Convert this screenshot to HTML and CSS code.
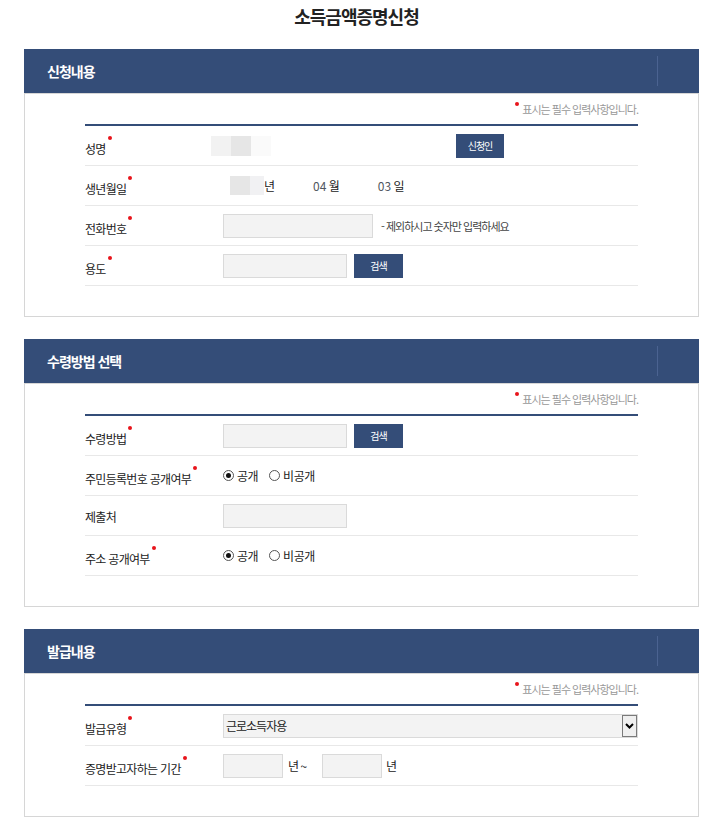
FILE: index.html
```html
<!DOCTYPE html>
<html lang="ko">
<head>
  <meta charset="UTF-8">
  <meta name="viewport" content="width=device-width, initial-scale=1.0">
  <title>소득금액증명신청</title>
  <link rel="stylesheet" href="styles.css">
</head>
<body>

  <h1 class="page-title">소득금액증명신청</h1>

  <!-- 신청내용 -->
  <div class="section">
    <div class="section-head"><h2>신청내용</h2><span class="head-side"></span></div>
    <div class="section-body">
      <p class="req-note"><span class="dot"></span>표시는 필수 입력사항입니다.</p>
      <div class="form-table">
        <div class="form-row">
          <div class="label">성명<span class="dot"></span></div>
          <div class="value">
            <span class="masked name-mask"><i class="m-a"></i><i class="m-b"></i><i class="m-c"></i></span>
            <button class="btn btn-small">신청인</button>
          </div>
        </div>
        <div class="form-row">
          <div class="label">생년월일<span class="dot"></span></div>
          <div class="value">
            <span class="masked birth-mask"><i class="m-b"></i><i class="m-d"></i></span>
            <span class="unit">년</span>
            <span class="date-part month"><b>04</b> 월</span>
            <span class="date-part day"><b>03</b> 일</span>
          </div>
        </div>
        <div class="form-row">
          <div class="label">전화번호<span class="dot"></span></div>
          <div class="value">
            <input class="field field-phone" type="text">
            <span class="hint">- 제외하시고 숫자만 입력하세요</span>
          </div>
        </div>
        <div class="form-row">
          <div class="label">용도<span class="dot"></span></div>
          <div class="value">
            <input class="field field-mid" type="text">
            <button class="btn btn-search">검색</button>
          </div>
        </div>
      </div>
    </div>
  </div>

  <!-- 수령방법 선택 -->
  <div class="section">
    <div class="section-head"><h2>수령방법 선택</h2><span class="head-side"></span></div>
    <div class="section-body">
      <p class="req-note"><span class="dot"></span>표시는 필수 입력사항입니다.</p>
      <div class="form-table">
        <div class="form-row">
          <div class="label">수령방법<span class="dot"></span></div>
          <div class="value">
            <input class="field field-mid" type="text">
            <button class="btn btn-search">검색</button>
          </div>
        </div>
        <div class="form-row">
          <div class="label">주민등록번호 공개여부<span class="dot"></span></div>
          <div class="value">
            <label class="radio"><span class="radio-mark checked"></span>공개</label>
            <label class="radio"><span class="radio-mark"></span>비공개</label>
          </div>
        </div>
        <div class="form-row">
          <div class="label">제출처</div>
          <div class="value">
            <input class="field field-mid" type="text">
          </div>
        </div>
        <div class="form-row">
          <div class="label">주소 공개여부<span class="dot"></span></div>
          <div class="value">
            <label class="radio"><span class="radio-mark checked"></span>공개</label>
            <label class="radio"><span class="radio-mark"></span>비공개</label>
          </div>
        </div>
      </div>
    </div>
  </div>

  <!-- 발급내용 -->
  <div class="section">
    <div class="section-head"><h2>발급내용</h2><span class="head-side"></span></div>
    <div class="section-body">
      <p class="req-note"><span class="dot"></span>표시는 필수 입력사항입니다.</p>
      <div class="form-table">
        <div class="form-row">
          <div class="label">발급유형<span class="dot"></span></div>
          <div class="value">
            <div class="select">
              <span class="select-text">근로소득자용</span>
              <span class="select-arrow">
                <svg width="9" height="6" viewBox="0 0 9 6"><polyline points="1,1 4.5,4.5 8,1" fill="none" stroke="#000" stroke-width="2"/></svg>
              </span>
            </div>
          </div>
        </div>
        <div class="form-row">
          <div class="label">증명받고자하는 기간<span class="dot"></span></div>
          <div class="value">
            <input class="field field-year" type="text">
            <span class="unit unit-range">년 ~</span>
            <input class="field field-year" type="text">
            <span class="unit unit-end">년</span>
          </div>
        </div>
      </div>
    </div>
  </div>

</body>
</html>
```

FILE: styles.css
```css
:root {
  --navy: #344d78;
  --navy-line: #4b6391;
  --text: #222;
  --row-line: #e8e8e8;
  --box-line: #d6d6d6;
  --field-bg: #f3f3f3;
  --field-line: #dadada;
  --req: #e8141b;
}

body {
  margin: 0;
  font-family: "Noto Sans CJK KR", "Noto Sans", sans-serif;
  color: var(--text);
  background: #fff;
}

.page-title {
  margin: 3px 0 20px;
  height: 26px;
  line-height: 26px;
  font-size: 18px;
  font-weight: bold;
  letter-spacing: -1px;
  text-align: center;
  color: #222;
}

.section {
  width: 675px;
  margin: 0 0 22px 24px;
}

.section + .section + .section {
  margin-top: 1px;
}

.section-head {
  display: flex;
  align-items: center;
  height: 44px;
  background: var(--navy);
}

.section-head h2 {
  flex: 1;
  margin: 0 0 0 23px;
  font-size: 14px;
  font-weight: bold;
  letter-spacing: -1px;
  color: #fff;
}

.head-side {
  width: 41px;
  height: 30px;
  border-left: 1px solid var(--navy-line);
}

.section-body {
  border: 1px solid var(--box-line);
  padding: 0 60px 30px;
}

.req-note {
  display: flex;
  justify-content: flex-end;
  align-items: center;
  height: 30px;
  margin: 0;
  font-size: 11px;
  letter-spacing: -1px;
  color: #999;
}

.req-note .dot {
  margin: 0 3px 0 0;
  align-self: flex-start;
  margin-top: 8px;
}

.dot {
  display: inline-block;
  width: 4px;
  height: 4px;
  border-radius: 50%;
  background: var(--req);
  margin-left: 2px;
  vertical-align: 14px;
}

.form-table {
  border-top: 2px solid var(--navy);
}

.form-row {
  display: flex;
  align-items: center;
  height: 39px;
  border-bottom: 1px solid var(--row-line);
}

.label {
  width: 138px;
  flex: none;
  padding-top: 2px;
  font-size: 12px;
  letter-spacing: -0.7px;
}

.value {
  display: flex;
  align-items: center;
  font-size: 12px;
  letter-spacing: -1px;
}

.masked {
  display: flex;
}

.masked i {
  display: block;
  width: 20px;
  height: 20px;
}

.masked .m-a { background: #f2f2f2; }
.masked .m-b { background: #e6e6e6; }
.masked .m-c { background: #fafafa; }
.masked .m-d { width: 14px; background: #f1f1f3; }

.name-mask {
  margin-left: -12px;
  width: 245px;
}

.birth-mask {
  margin-left: 7px;
}

.birth-mask i {
  height: 19px;
}

.unit {
  color: #222;
}

.date-part b {
  font-weight: normal;
  color: #4f5660;
  letter-spacing: 0;
}

.month { margin-left: 39px; }
.day { margin-left: 39px; }

.field {
  box-sizing: border-box;
  height: 24px;
  margin: 0;
  padding: 0 4px;
  border: 1px solid var(--field-line);
  background: var(--field-bg);
  font: inherit;
}

.field-phone { width: 150px; }
.field-mid { width: 124px; }
.field-year { width: 60px; }

.hint {
  margin-left: 8px;
  font-size: 11px;
  color: #444;
}

.btn {
  height: 24px;
  padding: 0;
  border: none;
  background: var(--navy);
  color: #fff;
  font-family: inherit;
  font-size: 10px;
  letter-spacing: -1px;
  cursor: pointer;
}

.btn-small { width: 48px; }

.btn-search {
  width: 49px;
  margin-left: 7px;
}

.radio {
  display: flex;
  align-items: center;
  margin-right: 11px;
  font-size: 12px;
  letter-spacing: -0.5px;
}

.radio-mark {
  box-sizing: border-box;
  width: 11px;
  height: 11px;
  margin-right: 3px;
  border: 1px solid #555;
  border-radius: 50%;
  background: #fff;
  position: relative;
}

.radio-mark.checked::after {
  content: "";
  position: absolute;
  left: 2px;
  top: 2px;
  width: 5px;
  height: 5px;
  border-radius: 50%;
  background: #111;
}

.select {
  box-sizing: border-box;
  display: flex;
  align-items: center;
  width: 415px;
  height: 24px;
  border: 1px solid var(--field-line);
  background: var(--field-bg);
}

.select-text {
  flex: 1;
  padding-left: 2px;
}

.select-arrow {
  box-sizing: border-box;
  display: flex;
  align-items: center;
  justify-content: center;
  width: 15px;
  height: 22px;
  border: 1px solid #7a7a7a;
  background: #efefef;
}

.unit-range { margin: 0 16px 0 5px; }
.unit-end { margin-left: 4px; }
```
